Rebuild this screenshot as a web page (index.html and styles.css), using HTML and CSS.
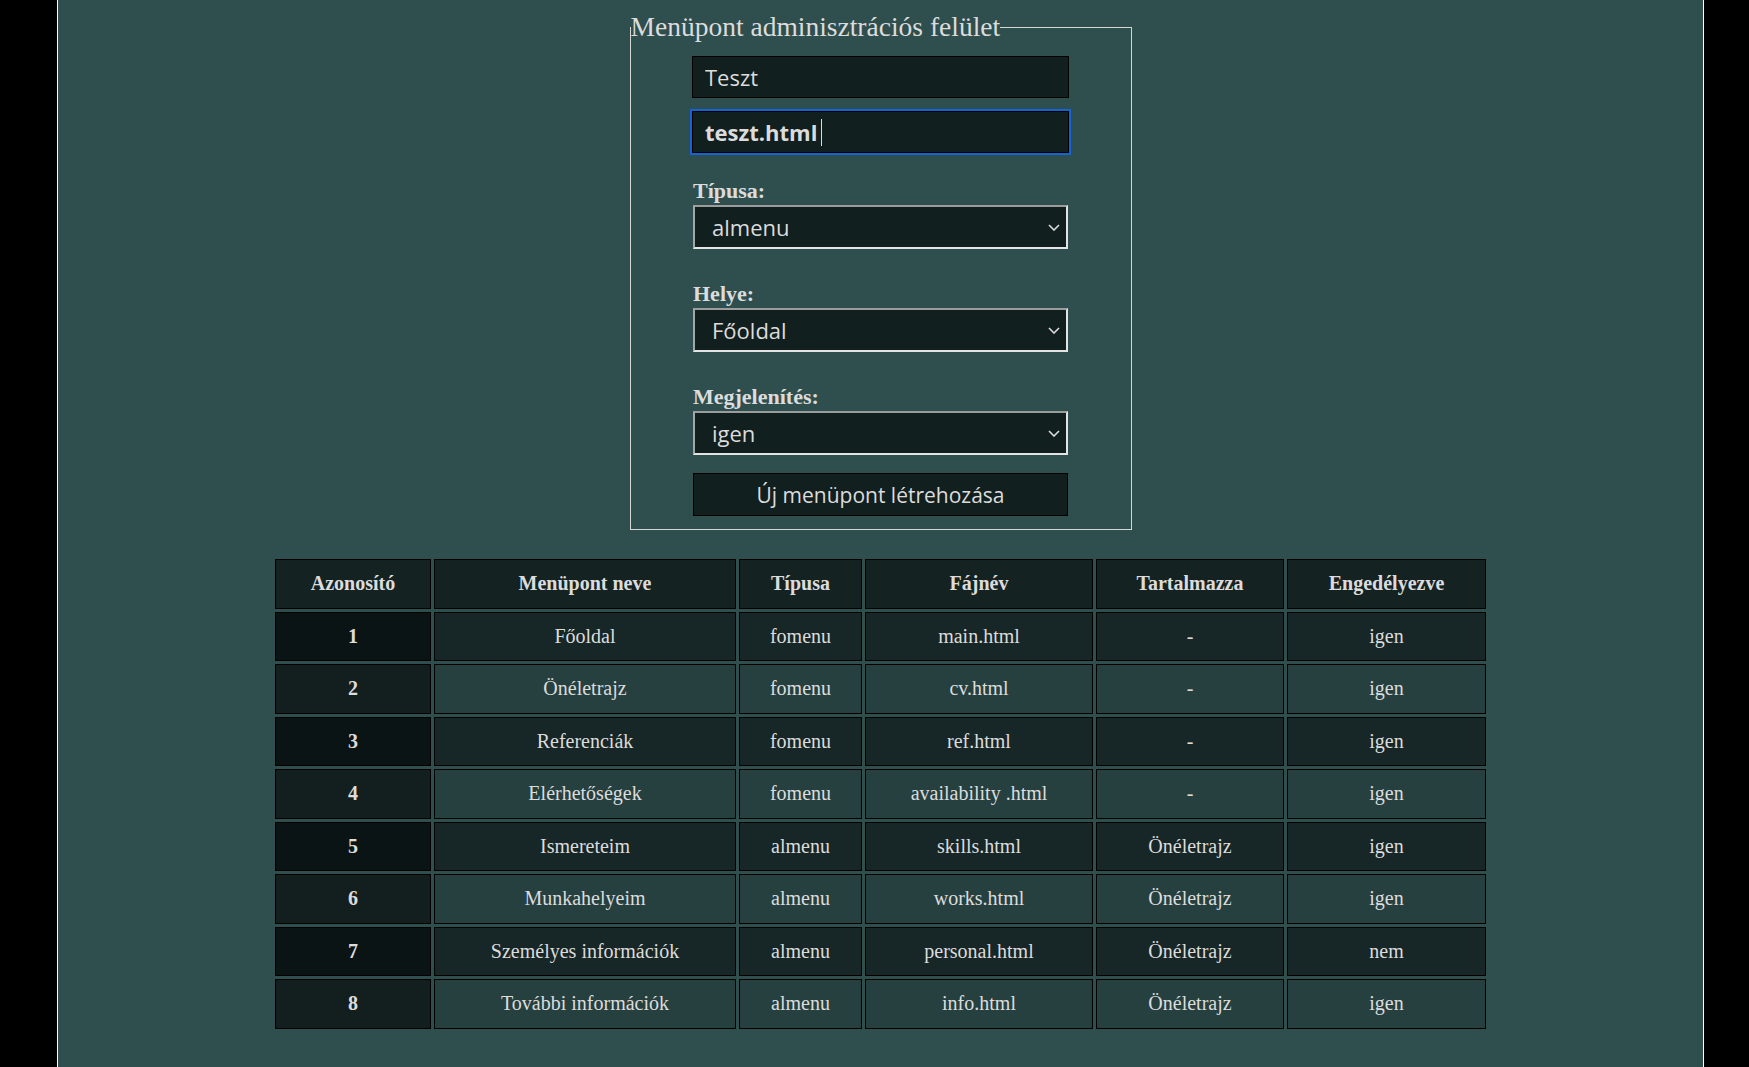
FILE: index.html
```html
<!DOCTYPE html>
<html lang="hu">
<head>
<meta charset="utf-8">
<title>Menüpont adminisztráció</title>
<link rel="stylesheet" href="styles.css">
</head>
<body>
<div class="page">
  <form class="admin">
    <fieldset class="panel">
      <legend class="panel-title">Menüpont adminisztrációs felület</legend>
      <div class="form">
        <input class="field" type="text" value="Teszt">
        <div class="field field-focus">teszt.html<span class="caret"></span></div>

        <label class="label label-first">Típusa:</label>
        <div class="select-wrap">
          <select class="select"><option>almenu</option><option>fomenu</option></select>
          <svg class="chev" width="12" height="7" viewBox="0 0 12 7"><polyline points="1,1 6,6 11,1" fill="none" stroke="#dcdcdc" stroke-width="1.6"/></svg>
        </div>

        <label class="label">Helye:</label>
        <div class="select-wrap">
          <select class="select"><option>Főoldal</option></select>
          <svg class="chev" width="12" height="7" viewBox="0 0 12 7"><polyline points="1,1 6,6 11,1" fill="none" stroke="#dcdcdc" stroke-width="1.6"/></svg>
        </div>

        <label class="label">Megjelenítés:</label>
        <div class="select-wrap">
          <select class="select"><option>igen</option><option>nem</option></select>
          <svg class="chev" width="12" height="7" viewBox="0 0 12 7"><polyline points="1,1 6,6 11,1" fill="none" stroke="#dcdcdc" stroke-width="1.6"/></svg>
        </div>

        <button class="btn" type="button">Új menüpont létrehozása</button>
      </div>
    </fieldset>
  </form>

  <table class="menu-table">
    <thead>
      <tr>
        <th class="c1">Azonosító</th>
        <th class="c2">Menüpont neve</th>
        <th class="c3">Típusa</th>
        <th class="c4">Fájnév</th>
        <th class="c5">Tartalmazza</th>
        <th class="c6">Engedélyezve</th>
      </tr>
    </thead>
    <tbody>
      <tr><td class="id">1</td><td>Főoldal</td><td>fomenu</td><td>main.html</td><td>-</td><td>igen</td></tr>
      <tr><td class="id">2</td><td>Önéletrajz</td><td>fomenu</td><td>cv.html</td><td>-</td><td>igen</td></tr>
      <tr><td class="id">3</td><td>Referenciák</td><td>fomenu</td><td>ref.html</td><td>-</td><td>igen</td></tr>
      <tr><td class="id">4</td><td>Elérhetőségek</td><td>fomenu</td><td>availability .html</td><td>-</td><td>igen</td></tr>
      <tr><td class="id">5</td><td>Ismereteim</td><td>almenu</td><td>skills.html</td><td>Önéletrajz</td><td>igen</td></tr>
      <tr><td class="id">6</td><td>Munkahelyeim</td><td>almenu</td><td>works.html</td><td>Önéletrajz</td><td>igen</td></tr>
      <tr><td class="id">7</td><td>Személyes információk</td><td>almenu</td><td>personal.html</td><td>Önéletrajz</td><td>nem</td></tr>
      <tr><td class="id">8</td><td>További információk</td><td>almenu</td><td>info.html</td><td>Önéletrajz</td><td>igen</td></tr>
    </tbody>
  </table>
</div>
</body>
</html>
```

FILE: styles.css
```css
html, body {
  margin: 0;
  padding: 0;
  background: #000;
}

body {
  font-family: "Liberation Serif", "Times New Roman", serif;
  color: #dcdcdc;
}

.page {
  box-sizing: border-box;
  margin-left: 57px;
  width: 1647px;
  min-height: 1067px;
  border-left: 1px solid #fff;
  border-right: 1px solid #fff;
  background: #2f4f4f;
  padding-top: 11px;
  overflow: hidden;
}

.admin {
  margin: 0;
}

.panel {
  box-sizing: border-box;
  width: 502px;
  margin: 0 auto;
  padding: 0 0 13px 0;
  border: 1px solid #d6d6d6;
}

.panel-title {
  padding: 0;
  font-size: 27.5px;
  line-height: 32px;
  color: #dcdcdc;
}

.form {
  width: 377px;
  margin: 0 auto;
  padding-top: 13px;
  display: flex;
  flex-direction: column;
}

.field {
  box-sizing: border-box;
  display: block;
  width: 377px;
  height: 42px;
  margin: 0;
  padding: 0 12px;
  border: 1px solid #000;
  background: #121f1f;
  color: #dcdcdc;
  font-family: "Open Sans", "Noto Sans", sans-serif;
  font-size: 22px;
  outline: none;
}

.field-focus {
  margin-top: 13px;
  display: flex;
  align-items: center;
  font-weight: bold;
  outline: 2px solid #1464d8;
  outline-offset: 0;
}

.caret {
  display: inline-block;
  width: 1px;
  height: 27px;
  margin-left: 4px;
  background: #dcdcdc;
}

.label {
  display: block;
  margin: 32px 0 2px 1px;
  font-size: 22px;
  line-height: 25px;
  font-weight: bold;
  color: #dcdcdc;
}

.label-first {
  margin-top: 25px;
}

.select-wrap {
  position: relative;
  width: 375px;
  margin-left: 1px;
}

.select {
  box-sizing: border-box;
  display: block;
  width: 375px;
  height: 44px;
  margin: 0;
  padding: 0 0 0 17px;
  -webkit-appearance: none;
  appearance: none;
  border: 2px solid;
  border-color: #9c9c9c #e4e4e4 #e4e4e4 #a6a6a6;
  border-radius: 0;
  background: #121f1f;
  color: #dcdcdc;
  font-family: "Open Sans", "Noto Sans", sans-serif;
  font-size: 22px;
  outline: none;
}

.chev {
  position: absolute;
  right: 8px;
  top: 19px;
  pointer-events: none;
}

.btn {
  box-sizing: border-box;
  display: block;
  width: 375px;
  height: 43px;
  margin: 18px 0 0 1px;
  padding: 0;
  border: 1px solid #000;
  background: #121f1f;
  color: #dcdcdc;
  font-family: "Open Sans", "Noto Sans", sans-serif;
  font-size: 21px;
}

.menu-table {
  margin: 26px auto 0;
  table-layout: fixed;
  border-collapse: separate;
  border-spacing: 3px 3px;
  font-size: 20px;
  color: #dcdcdc;
}

.menu-table th,
.menu-table td {
  box-sizing: border-box;
  height: 49.5px;
  padding: 0 4px;
  border: 1px solid #000;
  text-align: center;
  vertical-align: middle;
  font-weight: normal;
}

.menu-table th {
  background: #152222;
  font-weight: bold;
}

.c1 { width: 156px; }
.c2 { width: 302px; }
.c3 { width: 123px; }
.c4 { width: 228px; }
.c5 { width: 188px; }
.c6 { width: 199px; }

.menu-table tbody tr:nth-child(odd) td {
  background: #172626;
}

.menu-table tbody tr:nth-child(even) td {
  background: #264040;
}

.menu-table tbody tr:nth-child(odd) td.id {
  background: #0b1414;
}

.menu-table tbody tr:nth-child(even) td.id {
  background: #131f1f;
}

.menu-table td.id {
  font-weight: bold;
}
```
